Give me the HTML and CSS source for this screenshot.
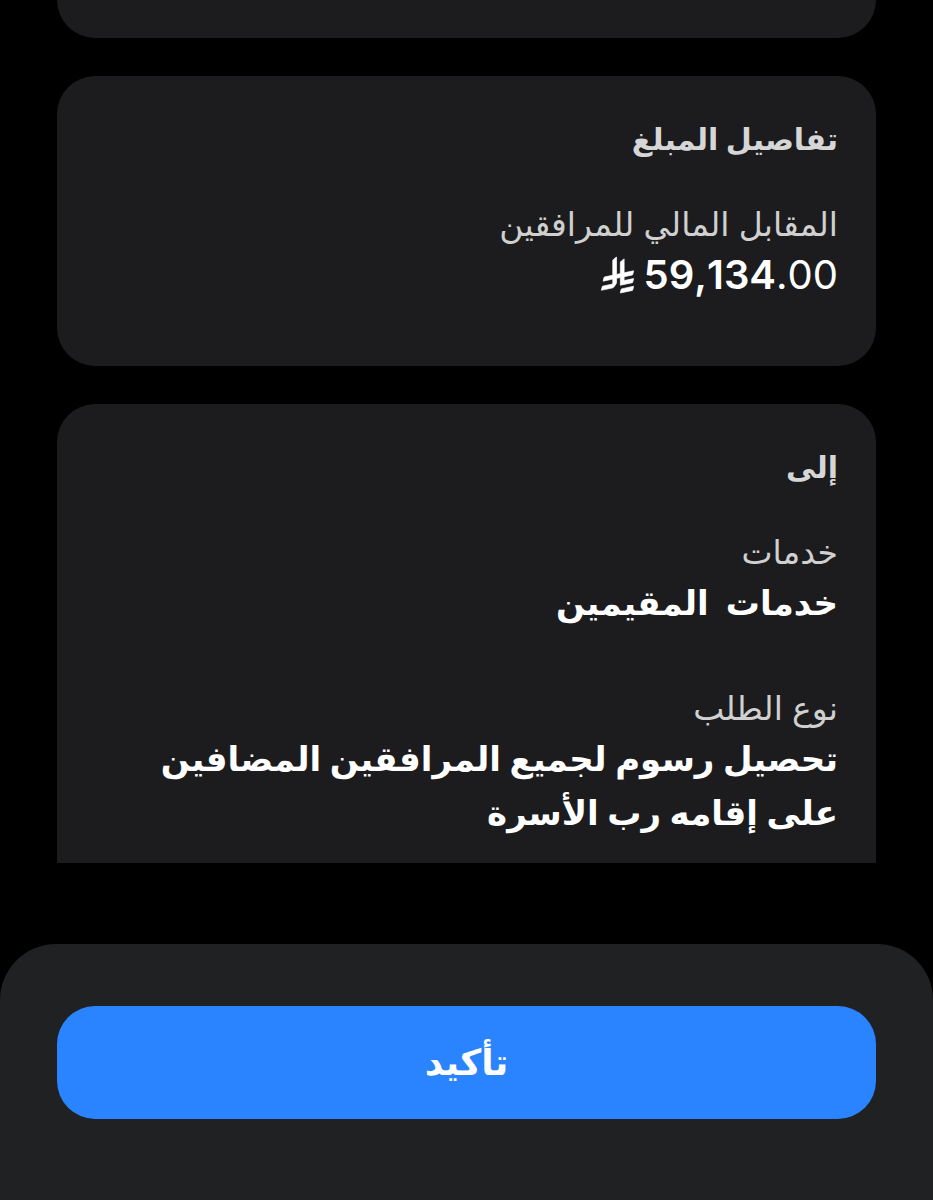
FILE: index.html
```html
<!DOCTYPE html>
<html lang="ar" dir="rtl">
<head>
<meta charset="utf-8">
<meta name="viewport" content="width=device-width, initial-scale=1">
<title>تأكيد</title>
<link rel="stylesheet" href="styles.css">
</head>
<body>
<main class="content">
  <section class="card card-previous"></section>
  <section class="card card-amount">
    <h2 class="card-title">تفاصيل المبلغ</h2>
    <div class="field">
      <div class="label">المقابل المالي للمرافقين</div>
      <div class="amount" dir="ltr">
        <svg class="riyal" viewBox="0 0 1124 1257" aria-hidden="true">
          <path d="M699.62 1113.02c-20.06 44.48-33.32 92.75-38.4 143.37l424.51-90.24c20.06-44.47 33.31-92.75 38.4-143.37l-424.51 90.24Z"/>
          <path d="M1085.73 895.8c20.06-44.47 33.32-92.75 38.4-143.37l-330.68 70.33v-135.2l292.27-62.11c20.06-44.47 33.32-92.75 38.4-143.37l-330.68 70.27V66.13c-50.67 28.45-95.67 66.32-132.25 110.99v403.35l-132.25 28.11V0c-50.67 28.44-95.67 66.32-132.25 110.99v525.69l-295.91 62.88c-20.06 44.47-33.33 92.75-38.42 143.37l334.33-71.05v170.26l-358.3 76.14c-20.06 44.47-33.32 92.75-38.4 143.37l375.04-79.7c30.53-6.35 56.77-24.4 73.83-49.24l68.78-101.97c7.14-10.55 11.3-23.27 11.3-36.97v-149.98l132.25-28.11v270.4l424.53-90.28Z"/>
        </svg>
        <span><b>59,134</b>.00</span>
      </div>
    </div>
  </section>
  <section class="card card-recipient">
    <h2 class="card-title">إلى</h2>
    <div class="field">
      <div class="label">خدمات</div>
      <div class="value">خدمات&nbsp; المقيمين</div>
    </div>
    <div class="field">
      <div class="label">نوع الطلب</div>
      <div class="value">تحصيل رسوم لجميع المرافقين المضافين على إقامه رب الأسرة</div>
    </div>
  </section>
</main>
<footer class="actions">
  <button class="confirm" type="button">تأكيد</button>
</footer>
</body>
</html>
```
FILE: styles.css
```css
* { box-sizing: border-box; }
body {
  margin: 0;
  min-height: 100vh;
  display: flex;
  flex-direction: column;
  background: #000;
  color: #fff;
  font-family: Inter, "DejaVu Sans", sans-serif;
}
.content {
  display: flex;
  flex-direction: column;
  gap: 38px;
  padding: 0 57px;
}
.card {
  background: #1c1c1e;
  border-radius: 38px;
  padding: 38px;
}
.card-previous {
  height: 38px;
  padding: 0;
  border-radius: 0 0 38px 38px;
}
.card-amount { padding-bottom: 64px; }
.card-recipient {
  border-radius: 38px 38px 0 0;
  padding-bottom: 23px;
}
.card-title {
  margin: 0 0 36px;
  font-size: 30px;
  line-height: 50px;
  font-weight: 600;
  color: #d6d6d6;
}
.field + .field { margin-top: 54px; }
.label {
  font-size: 33px;
  line-height: 48px;
  color: #d0d0d0;
}
.value {
  font-size: 34px;
  line-height: 54px;
  font-weight: 600;
}
.amount {
  display: flex;
  justify-content: flex-end;
  align-items: center;
  gap: 10px;
  font-size: 40px;
  line-height: 54px;
  font-kerning: none;
}
.amount b { font-weight: 600; }
.riyal {
  width: 33px;
  height: 36px;
  fill: #fff;
  stroke: #fff;
  stroke-width: 24;
  overflow: visible;
}
.actions {
  margin-top: auto;
  background: #202123;
  border-radius: 56px 56px 0 0;
  padding: 62px 57px 81px;
}
.confirm {
  display: block;
  width: 100%;
  padding: 28px;
  border: 0;
  border-radius: 38px;
  background: #2a84ff;
  color: #fff;
  font: 600 36px/57px Inter, "DejaVu Sans", sans-serif;
}
```
